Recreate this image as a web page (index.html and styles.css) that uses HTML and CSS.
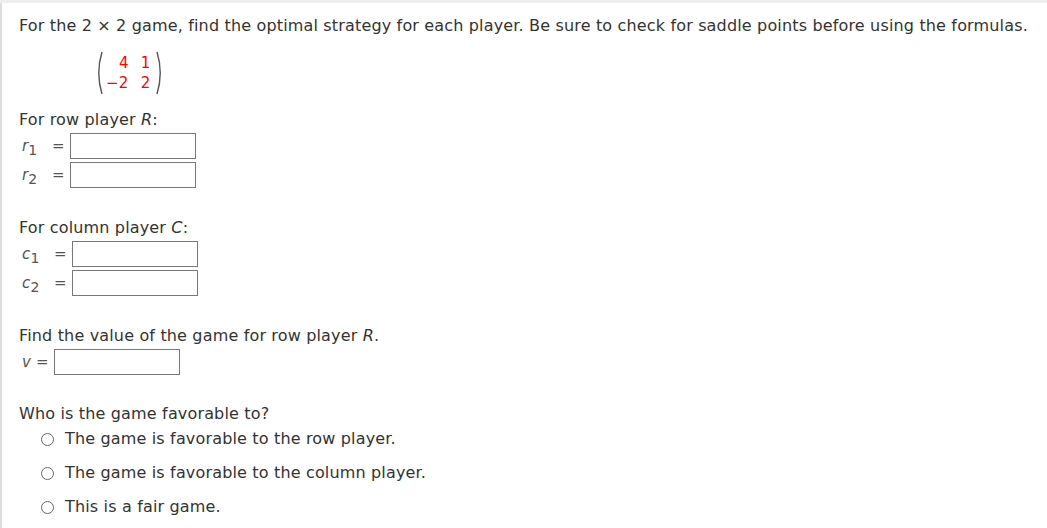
FILE: index.html
```html
<!DOCTYPE html>
<html>
<head>
<meta charset="utf-8">
<link rel="stylesheet" href="styles.css">
</head>
<body>
<div class="frame">
  <p class="q">For the 2 × 2 game, find the optimal strategy for each player. Be sure to check for saddle points before using the formulas.</p>
  <div class="matrix">
    <svg class="paren" width="8" height="44" viewBox="0 0 8 44"><path d="M7 1 Q0.5 22 7 43" fill="none" stroke="#555" stroke-width="1.4"/></svg>
    <div class="grid">
      <span>4</span><span>1</span>
      <span>−2</span><span>2</span>
    </div>
    <svg class="paren" width="8" height="44" viewBox="0 0 8 44"><path d="M1 1 Q7.5 22 1 43" fill="none" stroke="#555" stroke-width="1.4"/></svg>
  </div>

  <p class="head">For row player <i>R</i>:</p>
  <div class="rows">
    <div class="row"><span class="lbl"><i>r</i><sub>1</sub></span><span class="eq">=</span><span class="box"></span></div>
    <div class="row"><span class="lbl"><i>r</i><sub>2</sub></span><span class="eq">=</span><span class="box"></span></div>
  </div>

  <p class="head h2">For column player <i>C</i>:</p>
  <div class="rows">
    <div class="row"><span class="lbl c"><i>c</i><sub>1</sub></span><span class="eq">=</span><span class="box"></span></div>
    <div class="row"><span class="lbl c"><i>c</i><sub>2</sub></span><span class="eq">=</span><span class="box"></span></div>
  </div>

  <p class="head h2">Find the value of the game for row player <i>R</i>.</p>
  <div class="rows">
    <div class="row"><span class="lbl v"><i>v</i></span><span class="eq">=</span><span class="box"></span></div>
  </div>

  <p class="head h3">Who is the game favorable to?</p>
  <ul class="opts">
    <li><span class="radio"></span>The game is favorable to the row player.</li>
    <li><span class="radio"></span>The game is favorable to the column player.</li>
    <li><span class="radio"></span>This is a fair game.</li>
  </ul>
</div>
</body>
</html>
```
FILE: styles.css
```css
html, body {
  margin: 0;
  padding: 0;
  background: #fff;
}
body {
  font-family: "DejaVu Sans", Verdana, sans-serif;
  color: #333;
  font-size: 16px;
  letter-spacing: 0.16px;
  border-top: 3px solid #eeeeee;
}
.frame {
  border-left: 2px solid #dddddd;
  padding: 13px 0 20px 17px;
  min-height: 520px;
  box-sizing: border-box;
}
p { margin: 0; }
.q {
  line-height: 20px;
  white-space: nowrap;
}
.matrix {
  display: flex;
  align-items: center;
  margin: 15px 0 0 76px;
  height: 44px;
}
.paren {
  display: block;
}
.grid {
  display: grid;
  grid-template-columns: auto auto;
  column-gap: 12px;
  row-gap: 0;
  color: #ff0000;
  font-size: 15px;
  letter-spacing: 0.3px;
  line-height: 20px;
  justify-items: end;
  margin: 0 5px 0 3px;
}
.head {
  margin-top: 15px;
  line-height: 20px;
}
.head i { font-style: italic; }
.h2 { margin-top: 30px; }
.h3 { margin-top: 29px; }
.rows {
  display: flex;
  flex-direction: column;
  gap: 3px;
  margin-top: 3px;
  padding-left: 3px;
}
.row {
  display: flex;
  align-items: center;
  height: 26px;
}
.lbl {
  color: #555;
  font-size: 15px;
  width: 30px;
  line-height: 20px;
}
.lbl.c { width: 32px; }
.lbl.v { width: 14px; }
.lbl sub {
  font-size: 14px;
  vertical-align: -4px;
  line-height: 0;
}
.eq {
  color: #555;
  font-size: 15px;
  width: 18px;
}
.box {
  display: inline-block;
  width: 124px;
  height: 24px;
  border: 1px solid #777;
  background: #fff;
}
.opts {
  list-style: none;
  margin: 5px 0 0 0;
  padding: 0 0 0 22px;
  display: flex;
  flex-direction: column;
  gap: 14px;
}
.opts li {
  display: flex;
  align-items: center;
  line-height: 20px;
}
.radio {
  width: 11px;
  height: 11px;
  border: 1px solid #666;
  border-radius: 50%;
  margin-right: 11px;
  box-sizing: content-box;
  flex: none;
}
```
